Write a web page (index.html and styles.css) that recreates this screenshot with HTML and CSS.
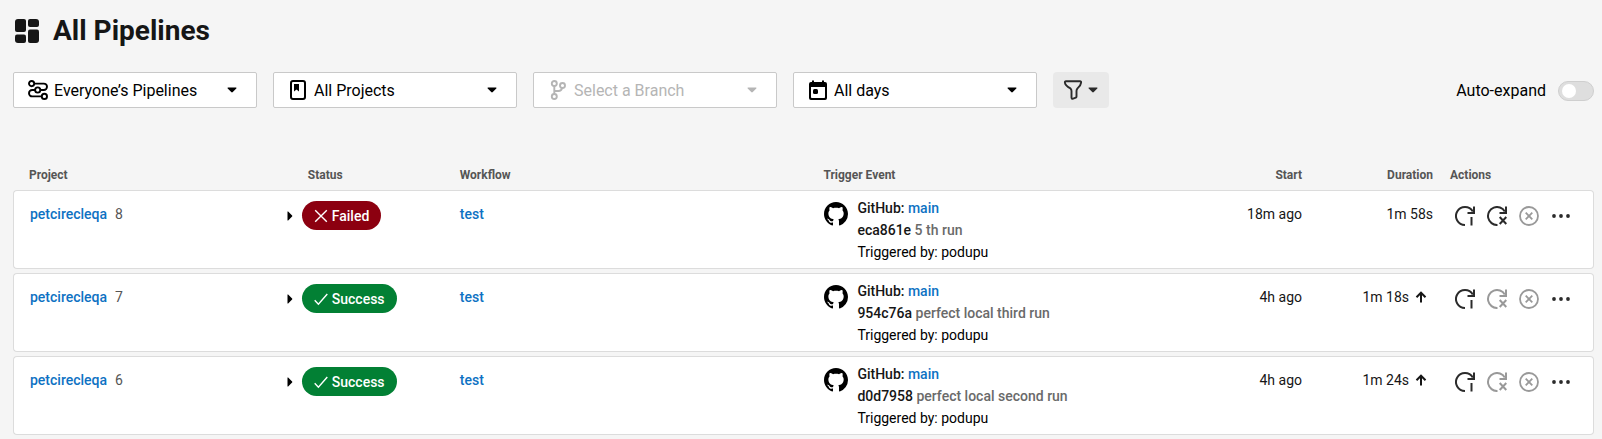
FILE: index.html
```html
<!DOCTYPE html>
<html lang="en">
<head>
<meta charset="utf-8">
<title>All Pipelines</title>
<link rel="stylesheet" href="styles.css">
</head>
<body>
<svg class="sprite" aria-hidden="true">
  <symbol id="i-caret" viewBox="0 0 10 6"><path d="M1.2.5h7.6c.7 0 .9.7.5 1.1L5.8 5.100a1.100 1.100 0 0 1-1.600 0L.7 1.600C.3 1.200.5.5 1.200.5z" fill="currentColor"/></symbol>
  <symbol id="i-toggle" viewBox="0 0 6 10"><path d="M.5.600c.3-.3.600-.2.900.1l3.700 3.700a.9.9 0 0 1 0 1.200L1.400 9.300c-.3.3-.6.400-.9.100z" fill="currentColor"/></symbol>
  <symbol id="i-github" viewBox="0 0 16 16"><path fill="currentColor" d="M8 0C3.58 0 0 3.58 0 8c0 3.54 2.29 6.53 5.47 7.59.4.07.55-.17.55-.38 0-.19-.01-.82-.01-1.49-2.01.37-2.53-.49-2.69-.94-.09-.23-.48-.94-.82-1.13-.28-.15-.68-.52-.01-.53.63-.01 1.08.58 1.23.82.72 1.21 1.87.87 2.33.66.07-.52.28-.87.51-1.07-1.78-.2-3.64-.89-3.64-3.95 0-.87.31-1.59.82-2.15-.08-.2-.36-1.02.08-2.12 0 0 .67-.21 2.2.82.64-.18 1.32-.27 2-.27s1.36.09 2 .27c1.53-1.04 2.2-.82 2.2-.82.44 1.1.16 1.92.08 2.12.51.56.82 1.27.82 2.15 0 3.07-1.87 3.75-3.65 3.95.29.25.54.73.54 1.48 0 1.07-.01 1.93-.01 2.2 0 .21.15.46.55.38A8.01 8.01 0 0 0 16 8c0-4.42-3.58-8-8-8z"/></symbol>
  <symbol id="i-rerun" viewBox="0 0 20 20"><g fill="none" stroke="currentColor" stroke-width="2"><path d="M10 19a9 9 0 1 1 7.800-13.500"/><path d="M19 .5V7h-6.500"/><path d="M16.500 11v8.500"/></g></symbol>
  <symbol id="i-rerun-failed" viewBox="0 0 20 20"><g fill="none" stroke="currentColor" stroke-width="2"><path d="M10.500 19a9 9 0 1 1 7.300-13.500"/><path d="M19 .5V7h-6.500"/><path d="M12.700 11l6.600 7M19.300 11l-6.600 7"/></g></symbol>
  <symbol id="i-cancel" viewBox="0 0 20 20"><g fill="none" stroke="currentColor" stroke-width="1.800"><circle cx="10" cy="10" r="9"/><path d="M6.700 6.700l6.600 6.600M13.300 6.700l-6.600 6.600"/></g></symbol>
  <symbol id="i-more" viewBox="0 0 20 20"><g fill="currentColor"><circle cx="3" cy="10" r="1.900"/><circle cx="10" cy="10" r="1.900"/><circle cx="17" cy="10" r="1.900"/></g></symbol>
  <symbol id="i-up" viewBox="0 0 12 12"><path d="M6 11.500V2M1.500 6.200L6 1.700l4.500 4.500" fill="none" stroke="currentColor" stroke-width="2"/></symbol>
  <symbol id="i-check" viewBox="0 0 14 14"><path d="M.7 8.200l3.700 4L13.300 2" fill="none" stroke="currentColor" stroke-width="1.400"/></symbol>
  <symbol id="i-cross" viewBox="0 0 14 14"><path d="M1.200 1.200l11.600 11.600M12.800 1.200L1.200 12.800" fill="none" stroke="currentColor" stroke-width="1.400"/></symbol>
</svg>

<header class="title">
  <svg class="title-icon" viewBox="0 0 24 24" fill="currentColor" aria-hidden="true">
    <path d="M3 0h6q2 0 2 2v9q0 2-2 2H2q-2 0-2-2V3q0-3 3-3z"/>
    <path d="M15 0h6q3 0 3 3v3q0 2-2 2h-7q-2 0-2-2V2q0-2 2-2z"/>
    <path d="M2 15.500h7q2 0 2 2V22q0 2-2 2H3q-3 0-3-3v-3.500q0-2 2-2z"/>
    <path d="M15 10.500h7q2 0 2 2V21q0 3-3 3h-6q-2 0-2-2v-9.500q0-2 2-2z"/>
  </svg>
  <h1>All Pipelines</h1>
</header>

<form class="filters">
  <div class="picker">
    <select aria-label="Owner"><option>Everyone’s Pipelines</option></select>
    <svg class="picker-icon" viewBox="0 0 20 20" fill="none" stroke="currentColor" stroke-width="1.900" aria-hidden="true">
      <circle cx="3.600" cy="3.600" r="2.600"/><circle cx="9.700" cy="10" r="2.600"/><circle cx="16.400" cy="16.400" r="2.600"/>
      <path d="M6.200 3.600h9.600a3.200 3.200 0 0 1 0 6.400h-3.500M7.100 10H4.200a3.200 3.200 0 0 0 0 6.400h9.600"/>
    </svg>
    <svg class="caret"><use href="#i-caret"/></svg>
  </div>
  <div class="picker">
    <select aria-label="Project"><option>All Projects</option></select>
    <svg class="picker-icon" viewBox="0 0 20 20" aria-hidden="true">
      <rect x="3" y="1" width="14" height="18" rx="2" fill="none" stroke="currentColor" stroke-width="2"/>
      <path d="M6 4h5v7.500L8.500 9.500 6 11.500z" fill="currentColor"/>
    </svg>
    <svg class="caret"><use href="#i-caret"/></svg>
  </div>
  <div class="picker is-disabled">
    <select aria-label="Branch" disabled><option>Select a Branch</option></select>
    <svg class="picker-icon" viewBox="0 0 20 20" fill="none" stroke="currentColor" stroke-width="1.900" aria-hidden="true">
      <circle cx="6.300" cy="3.500" r="2.500"/><circle cx="14.500" cy="5.500" r="2.500"/><circle cx="6.300" cy="16.500" r="2.500"/>
      <path d="M6.300 6v8M14 8c-.5 2.500-1.500 3-3.500 3H6.300"/>
    </svg>
    <svg class="caret"><use href="#i-caret"/></svg>
  </div>
  <div class="picker">
    <select aria-label="Date range"><option>All days</option></select>
    <svg class="picker-icon" viewBox="0 0 20 20" fill="currentColor" aria-hidden="true">
      <path fill-rule="evenodd" d="M3 2h1V.5h2V2h8V.5h2V2h1q2 0 2 2v14q0 2-2 2H3q-2 0-2-2V4q0-2 2-2zM3 7v10.200q0 .8.800.8h12.400q.8 0 .8-.8V7z"/>
      <rect x="5" y="9" width="5" height="5" rx="1.500"/>
    </svg>
    <svg class="caret"><use href="#i-caret"/></svg>
  </div>
  <button class="filter-button" type="button" aria-label="More filters">
    <svg class="funnel" viewBox="0 0 20 20" fill="none" stroke="currentColor" stroke-width="1.900" stroke-linejoin="round" aria-hidden="true">
      <path d="M3 1.200h14q1.300 0 1.100 1.400c-.3 2.800-2 4.200-3.600 5.800-.8.900-1 1.600-1 2.600v5.500q0 .8-.7 1.200l-2.600 1q-1.700.4-1.700-1.200V11c0-1-.3-1.700-1.100-2.600C4.500 6.800 2.200 5.400 1.900 2.600Q1.700 1.200 3 1.200z"/>
    </svg>
    <svg class="button-caret"><use href="#i-caret"/></svg>
  </button>
  <label class="auto-expand">Auto-expand <input class="switch" type="checkbox" role="switch"></label>
</form>

<table class="pipelines">
  <colgroup><col class="c-project"><col class="c-status"><col class="c-workflow"><col class="c-trigger"><col class="c-start"><col class="c-duration"><col class="c-actions"></colgroup>
  <thead>
    <tr><th>Project</th><th class="status-head">Status</th><th>Workflow</th><th>Trigger Event</th><th class="num">Start</th><th class="num duration">Duration</th><th class="actions-head">Actions</th></tr>
  </thead>
  <tbody>
    <tr>
      <td><div class="line"><a class="strong" href="#">petcirecleqa</a><span class="number">8</span></div></td>
      <td class="status-cell"><div class="status"><button class="toggle" type="button" aria-label="Expand jobs"><svg><use href="#i-toggle"/></svg></button><span class="badge failed"><svg><use href="#i-cross"/></svg>Failed</span></div></td>
      <td><div class="line"><a class="strong" href="#">test</a></div></td>
      <td><div class="trigger"><svg class="github"><use href="#i-github"/></svg><div><div class="strong">GitHub: <a href="#">main</a></div><div class="strong">eca861e <span class="message">5 th run</span></div><div>Triggered by: podupu</div></div></div></td>
      <td class="num"><div class="line">18m ago</div></td>
      <td class="num duration"><div class="line">1m 58s</div></td>
      <td class="actions-cell"><div class="actions"><button type="button" aria-label="Rerun from start"><svg><use href="#i-rerun"/></svg></button><button type="button" aria-label="Rerun from failed"><svg><use href="#i-rerun-failed"/></svg></button><button type="button" aria-label="Cancel" disabled><svg><use href="#i-cancel"/></svg></button><button type="button" aria-label="More"><svg><use href="#i-more"/></svg></button></div></td>
    </tr>
    <tr>
      <td><div class="line"><a class="strong" href="#">petcirecleqa</a><span class="number">7</span></div></td>
      <td class="status-cell"><div class="status"><button class="toggle" type="button" aria-label="Expand jobs"><svg><use href="#i-toggle"/></svg></button><span class="badge success"><svg><use href="#i-check"/></svg>Success</span></div></td>
      <td><div class="line"><a class="strong" href="#">test</a></div></td>
      <td><div class="trigger"><svg class="github"><use href="#i-github"/></svg><div><div class="strong">GitHub: <a href="#">main</a></div><div class="strong">954c76a <span class="message">perfect local third run</span></div><div>Triggered by: podupu</div></div></div></td>
      <td class="num"><div class="line">4h ago</div></td>
      <td class="num duration"><div class="line">1m 18s<svg class="trend"><use href="#i-up"/></svg></div></td>
      <td class="actions-cell"><div class="actions"><button type="button" aria-label="Rerun from start"><svg><use href="#i-rerun"/></svg></button><button type="button" aria-label="Rerun from failed" disabled><svg><use href="#i-rerun-failed"/></svg></button><button type="button" aria-label="Cancel" disabled><svg><use href="#i-cancel"/></svg></button><button type="button" aria-label="More"><svg><use href="#i-more"/></svg></button></div></td>
    </tr>
    <tr>
      <td><div class="line"><a class="strong" href="#">petcirecleqa</a><span class="number">6</span></div></td>
      <td class="status-cell"><div class="status"><button class="toggle" type="button" aria-label="Expand jobs"><svg><use href="#i-toggle"/></svg></button><span class="badge success"><svg><use href="#i-check"/></svg>Success</span></div></td>
      <td><div class="line"><a class="strong" href="#">test</a></div></td>
      <td><div class="trigger"><svg class="github"><use href="#i-github"/></svg><div><div class="strong">GitHub: <a href="#">main</a></div><div class="strong">d0d7958 <span class="message">perfect local second run</span></div><div>Triggered by: podupu</div></div></div></td>
      <td class="num"><div class="line">4h ago</div></td>
      <td class="num duration"><div class="line">1m 24s<svg class="trend"><use href="#i-up"/></svg></div></td>
      <td class="actions-cell"><div class="actions"><button type="button" aria-label="Rerun from start"><svg><use href="#i-rerun"/></svg></button><button type="button" aria-label="Rerun from failed" disabled><svg><use href="#i-rerun-failed"/></svg></button><button type="button" aria-label="Cancel" disabled><svg><use href="#i-cancel"/></svg></button><button type="button" aria-label="More"><svg><use href="#i-more"/></svg></button></div></td>
    </tr>
  </tbody>
</table>
</body>
</html>
```
FILE: styles.css
```css
* { box-sizing: border-box; }

body {
  margin: 0;
  padding: 15px 8px 0 13px;
  background: #f5f5f5;
  color: #161616;
  font: 14px/22px Roboto, "Liberation Sans", sans-serif;
}

.sprite { display: none; }
svg { display: block; flex: none; }
button { padding: 0; border: 0; background: none; color: inherit; font: inherit; }
a { color: #0e72c3; text-decoration: none; }

.title { display: flex; align-items: center; gap: 14px; padding-left: 2px; }
.title-icon { width: 24px; height: 24px; }
.title h1 { margin: 0; font-size: 28px; line-height: 32px; font-weight: 700; }

.filters { display: flex; align-items: center; gap: 16px; margin-top: 25px; font-size: 16px; color: #000; }

.picker { display: grid; grid-template-columns: 244px; align-items: center; }
.picker > * { grid-area: 1 / 1; }
.picker select {
  appearance: none;
  width: 100%;
  height: 36px;
  padding: 1px 32px 0 40px;
  border: 1px solid #c9c9c9;
  border-radius: 2px;
  background: #fff;
  color: inherit;
  font: inherit;
  opacity: 1;
}
.picker svg { pointer-events: none; }
.picker-icon { width: 20px; height: 20px; margin-left: 15px; }
.caret { width: 10px; height: 6px; justify-self: end; margin-right: 20px; }
.is-disabled { color: #b5b5b5; }

.filter-button {
  display: flex;
  align-items: center;
  gap: 5px;
  width: 56px;
  height: 36px;
  padding-left: 10px;
  border-radius: 4px;
  background: #e9e9e9;
  color: #2b2b2b;
}
.funnel { width: 20px; height: 20px; }
.button-caret { width: 10px; height: 6px; }

.auto-expand { display: flex; align-items: center; gap: 12px; margin-left: auto; padding-top: 2px; }
.switch {
  appearance: none;
  width: 36px;
  height: 20px;
  margin: 0;
  padding: 2px 3px;
  border: 1px solid #cfcfcf;
  border-radius: 10px;
  background: #dedede;
}
.switch::before { content: ""; display: block; width: 14px; height: 14px; border-radius: 7px; background: #fff; }

.pipelines { width: 100%; margin-top: 51px; table-layout: fixed; border-collapse: separate; border-spacing: 0 4px; }
.c-project { width: 17%; }
.c-status { width: 162px; }
.c-workflow { width: 23%; }
.c-start { width: 148px; }
.c-duration { width: 124px; }
.c-actions { width: 152px; }

th { padding: 1px 16px 0; color: #555; font-size: 12px; line-height: 22px; font-weight: 700; text-align: left; }
td { padding: 6px 16px 5px; vertical-align: top; background: #fff; border: solid #dcdcdc; border-width: 1px 0; }
td:first-child { border-left-width: 1px; border-radius: 4px 0 0 4px; }
td:last-child { border-right-width: 1px; border-radius: 0 4px 4px 0; }

.status-head { padding-left: 26px; }
.num { text-align: right; }
.duration { padding-right: 9px; }
.status-cell { padding-left: 0; }
.actions-head { padding-left: 8px; }
.actions-cell { padding-left: 7px; padding-right: 0; }

.line { padding-top: 6px; }
.num .line { display: flex; align-items: center; justify-content: flex-end; }
.trend { width: 12px; height: 12px; margin: 0 6px; }
.strong { font-weight: 500; }
.number { margin-left: 8px; color: #555; }
.message { color: #6a6a6a; }

.status { display: flex; align-items: center; gap: 3px; padding-top: 4px; }
.toggle { display: grid; place-items: center; width: 17px; height: 28px; color: #000; }
.toggle svg { width: 6px; height: 10px; }
.badge { display: flex; align-items: center; gap: 4px; height: 29px; padding: 0 12px; border-radius: 15px; color: #fff; font-weight: 500; }
.badge svg { width: 14px; height: 14px; }
.failed { background: #8c0010; }
.success { background: #028034; }

.trigger { display: flex; gap: 9px; padding-left: 1px; color: #000; }
.trigger .strong { color: #161616; }
.trigger .message { color: #6a6a6a; }
.github { width: 24px; height: 24px; margin-top: 5px; }

.actions { display: flex; padding-top: 3px; color: #2b2b2b; }
.actions button { display: grid; place-items: center; width: 32px; height: 32px; }
.actions button:disabled { color: #999; }
.actions svg { width: 20px; height: 20px; }
```
